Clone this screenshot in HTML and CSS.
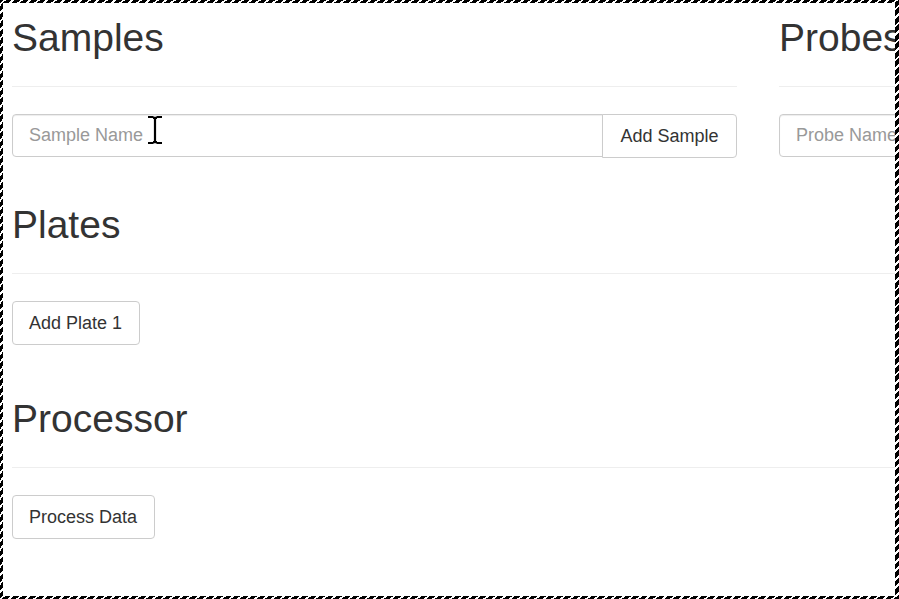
FILE: index.html
```html
<!DOCTYPE html>
<html lang="en">
<head>
<meta charset="utf-8">
<title>Samples</title>
<link rel="stylesheet" href="styles.css">
</head>
<body>
<div class="frame">
  <div class="page">
    <div class="top-row">
      <section class="col">
        <div class="page-header"><h1>Samples</h1></div>
        <div class="input-group">
          <input class="form-control" type="text" placeholder="Sample Name">
          <button class="btn btn-addon" type="button">Add Sample</button>
        </div>
      </section>
      <section class="col">
        <div class="page-header"><h1>Probes</h1></div>
        <div class="input-group">
          <input class="form-control" type="text" placeholder="Probe Name">
          <button class="btn btn-addon" type="button">Add Probe</button>
        </div>
      </section>
    </div>
    <section class="full plates">
      <div class="page-header"><h1>Plates</h1></div>
      <button class="btn" type="button">Add Plate 1</button>
    </section>
    <section class="full processor">
      <div class="page-header"><h1>Processor</h1></div>
      <button class="btn" type="button">Process Data</button>
    </section>
  </div>
  <svg class="ibeam" width="18" height="30" viewBox="0 0 18 30" aria-hidden="true">
    <path d="M2 2h5.5M10.5 2H16M9 2.5v25M2 28h5.5M10.5 28H16M7 2.8h4M7 27.2h4" stroke="#000" stroke-width="2.2" fill="none"/>
  </svg>
</div>
</body>
</html>
```

FILE: styles.css
```css
* { box-sizing: border-box; }
html, body { margin: 0; padding: 0; background: #fff; }
body {
  font-family: "Liberation Sans", Arial, Helvetica, sans-serif;
  color: #333;
  overflow: hidden;
}
.frame {
  position: relative;
  width: 899px;
  height: 599px;
  overflow: hidden;
  border-style: solid;
  border-width: 3px 4px 3px 3px;
  border-image: repeating-linear-gradient(-45deg, #000 0 4px, #fff 4px 6px) 4;
  background: #fff;
}
.page {
  padding-left: 9px;
  width: 1600px;
}
.top-row {
  display: flex;
  gap: 42px;
}
.col {
  flex: none;
  width: 725px;
}
.full {
  width: 884px;
}
.page-header {
  padding-bottom: 26px;
  border-bottom: 1px solid #eee;
}
h1 {
  margin: 13px 0 0;
  font-size: 39px;
  line-height: 44px;
  font-weight: 400;
  color: #333;
}
.plates h1 { margin-top: 45px; }
.processor h1 { margin-top: 52px; }
.input-group {
  display: flex;
  margin-top: 27px;
  height: 44px;
}
.form-control {
  flex: 1;
  min-width: 0;
  height: 43px;
  border: 1px solid #ccc;
  border-radius: 4px 0 0 4px;
  box-shadow: inset 0 1px 1px rgba(0,0,0,.075);
  padding: 0 16px;
  font: 18px "Liberation Sans", Arial, sans-serif;
  color: #555;
  outline: none;
}
.form-control::placeholder { color: #999; }
.btn {
  display: block;
  height: 44px;
  padding: 0 17px 0 16px;
  background: #fff;
  border: 1px solid #ccc;
  border-radius: 4px;
  font: 18px "Liberation Sans", Arial, sans-serif;
  color: #333;
  margin-top: 27px;
}
.btn-addon {
  margin: 0 0 0 -1px;
  border-radius: 0 4px 4px 0;
  width: 135px;
  padding: 0;
}
.ibeam {
  position: absolute;
  left: 143px;
  top: 112px;
}
```
